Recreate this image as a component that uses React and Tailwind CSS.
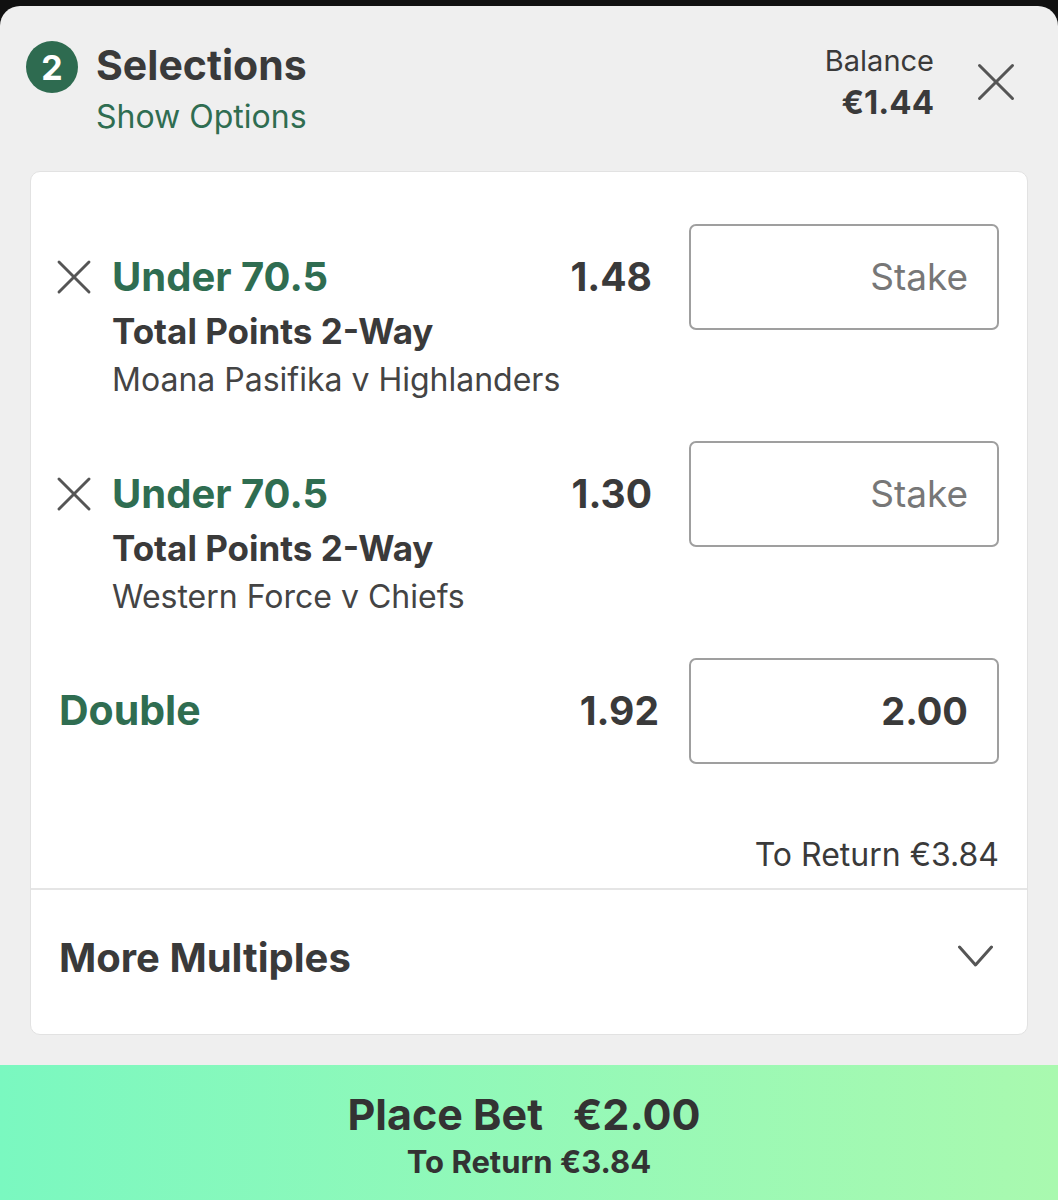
import { X } from 'lucide-react';

const selections = [
  { id: 1, name: 'Under 70.5', market: 'Total Points 2-Way', event: 'Moana Pasifika v Highlanders', odds: '1.48' },
  { id: 2, name: 'Under 70.5', market: 'Total Points 2-Way', event: 'Western Force v Chiefs', odds: '1.30' },
];

function StakeBox({ value }) {
  return (
    <div className="w-[310px] h-[106px] shrink-0 rounded-[7px] border-2 border-[#9f9f9f] bg-white flex items-center justify-end pr-[29px]">
      {value ? (
        <span className="text-[38px] font-bold text-[#3a3a3a]">{value}</span>
      ) : (
        <span className="text-[37px] text-[#777]">Stake</span>
      )}
    </div>
  );
}

export default function App() {
  return (
    <div
      className="w-[1058px] h-[1200px] bg-[#111] flex flex-col overflow-hidden"
      style={{ fontFamily: 'Inter, "Liberation Sans", sans-serif' }}
    >
      <div className="mt-[6px] flex-1 bg-[#efefef] rounded-t-[20px] flex flex-col">
        {/* Header */}
        <div className="flex justify-between pl-[26px] pr-[29px] pt-[35px] h-[165px]">
          <div className="flex items-start gap-[18px]">
            <div className="w-[52px] h-[52px] rounded-full bg-[#2e6b50] text-white flex items-center justify-center text-[34px] font-bold">
              2
            </div>
            <div className="flex flex-col">
              <span className="text-[41px] leading-[48px] font-bold text-[#3a3a3a]">Selections</span>
              <span className="mt-[8px] text-[32px] leading-[40px] text-[#2f6d51]">Show Options</span>
            </div>
          </div>
          <div className="flex items-start gap-[29px]">
            <div className="flex flex-col items-end">
              <span className="text-[29px] leading-[40px] text-[#3a3a3a]">Balance</span>
              <span className="text-[33px] leading-[42px] font-bold text-[#3a3a3a]">€1.44</span>
            </div>
            <X className="w-[66px] h-[66px] mt-[8px] text-[#555]" strokeWidth={1.1} />
          </div>
        </div>

        {/* Bet card */}
        <div className="mx-[30px] bg-white rounded-[10px] border border-[#e2e2e2] flex flex-col">
          <div className="px-[28px] pt-[52px]">
            {selections.map((s) => (
              <div key={s.id} className="h-[217px] flex items-start">
                <div className="flex-1 flex flex-col pt-[31px]">
                  <div className="flex items-center h-[44px]">
                    <X className="w-[60px] h-[60px] -ml-[15px] mr-[8px] shrink-0 text-[#555]" strokeWidth={1.15} />
                    <span className="flex-1 text-[40px] font-bold text-[#2f6d51]">{s.name}</span>
                    <span className="text-[39px] font-bold text-[#3a3a3a] mr-[37px]">{s.odds}</span>
                  </div>
                  <span className="mt-[12px] pl-[53px] text-[35px] leading-[40px] font-bold text-[#3a3a3a]">{s.market}</span>
                  <span className="mt-[11px] pl-[53px] text-[32px] leading-[36px] text-[#444]">{s.event}</span>
                </div>
                <StakeBox />
              </div>
            ))}
            <div className="flex items-center h-[106px]">
              <span className="flex-1 text-[41px] font-bold text-[#2f6d51]">Double</span>
              <span className="text-[39px] font-bold text-[#3a3a3a] mr-[30px]">1.92</span>
              <StakeBox value="2.00" />
            </div>
            <div className="mt-[73px] pb-[15px] text-right text-[32px] leading-[36px] text-[#3a3a3a]">
              To Return €3.84
            </div>
          </div>
          <div className="h-[2px] bg-[#e5e5e5]" />
          <div className="h-[144px] flex items-center justify-between pl-[28px] pr-[34px] pb-[8px]">
            <span className="text-[40px] font-bold text-[#3a3a3a]">More Multiples</span>
            <svg width="35" height="23" viewBox="0 0 35 23" fill="none" className="-mt-[4px]">
              <polyline points="1.5,2 17.5,20 33.5,2" stroke="#555" strokeWidth="3" strokeLinecap="round" strokeLinejoin="round" />
            </svg>
          </div>
        </div>

        <div className="h-[30px]" />

        {/* Place bet */}
        <div className="flex-1 bg-gradient-to-r from-[#7af8c0] to-[#a9f9af] flex flex-col items-center justify-center pt-[2px]">
          <div className="flex items-center gap-[30px] text-[43px] leading-[52px] font-bold text-[#333] -ml-[10px]">
            <span>Place Bet</span>
            <span>€2.00</span>
          </div>
          <span className="mt-[4px] text-[31px] leading-[36px] font-bold text-[#333]">To Return €3.84</span>
        </div>
      </div>
    </div>
  );
}
